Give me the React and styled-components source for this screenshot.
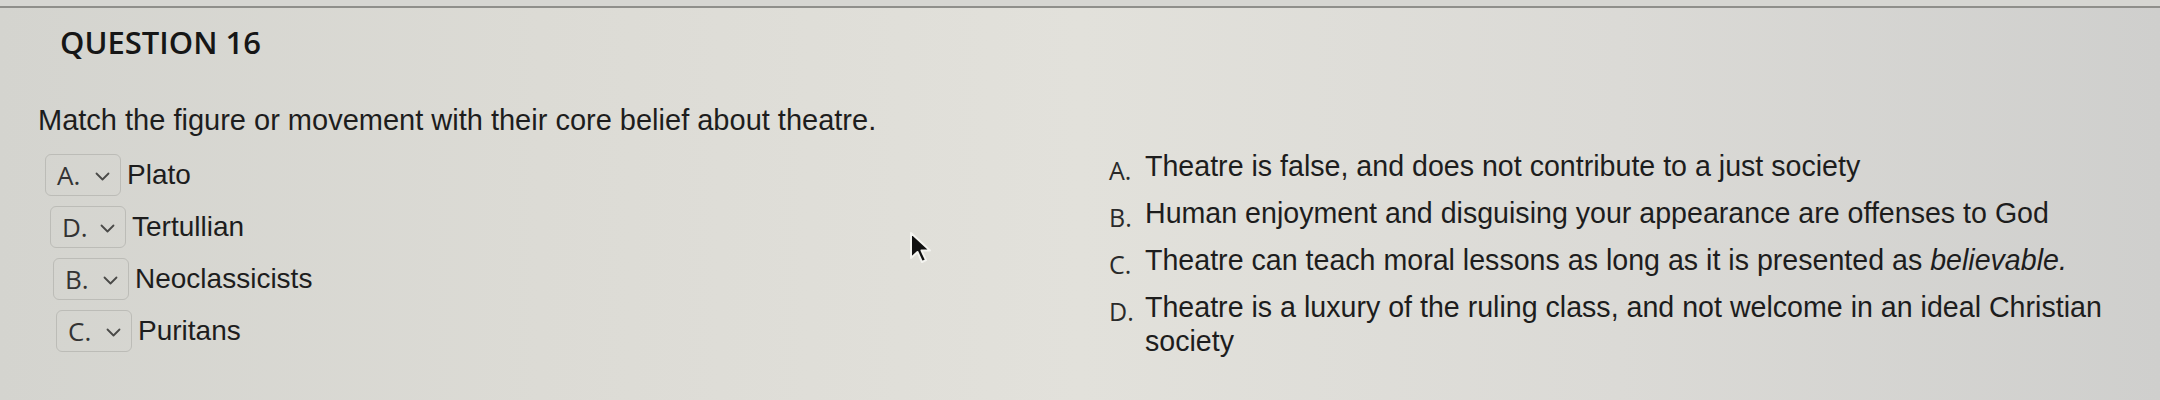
import React from 'react';
import styled, { createGlobalStyle } from 'styled-components';

const GlobalStyle = createGlobalStyle`
  html, body {
    margin: 0;
    padding: 0;
  }
  body {
    width: 2160px;
    height: 400px;
    overflow: hidden;
    background: linear-gradient(90deg, #d4d4cf 0%, #dcdbd5 25%, #e2e1db 50%, #dbdad6 75%, #cfcfcd 100%);
    font-family: "Liberation Sans", Arial, sans-serif;
    color: #1d1d1d;
  }
`;

const matches = [
  { pick: 'A.', label: 'Plato' },
  { pick: 'D.', label: 'Tertullian' },
  { pick: 'B.', label: 'Neoclassicists' },
  { pick: 'C.', label: 'Puritans' },
];

const answers = [
  { letter: 'A.', text: <>Theatre is false, and does not contribute to a just society</> },
  { letter: 'B.', text: <>Human enjoyment and disguising your appearance are offenses to God</> },
  { letter: 'C.', text: <>Theatre can teach moral lessons as long as it is presented as <em>believable.</em></> },
  { letter: 'D.', text: <>Theatre is a luxury of the ruling class, and not welcome in an ideal Christian society</> },
];

const Chevron = () => (
  <svg width="15" height="9" viewBox="0 0 15 9" fill="none">
    <path d="M1.5 1.5l6 6 6-6" stroke="#4a4a48" strokeWidth="1.8" strokeLinecap="round" strokeLinejoin="round" />
  </svg>
);

const Cursor = () => (
  <CursorMark width="24" height="34" viewBox="0 0 24 34">
    <path d="M2 2v25l6.5-6 4.5 10 4-1.8-4.5-9.7H21z" fill="#111" stroke="#f4f4f0" strokeWidth="2" strokeLinejoin="round" />
  </CursorMark>
);

const App = () => (
  <>
    <GlobalStyle />
    <Page>
      <TopRule />
      <Title>QUESTION 16</Title>
      <Prompt>Match the figure or movement with their core belief about theatre.</Prompt>
      <Columns>
        <PickList>
          {matches.map((m, i) => (
            <PickRow key={m.label} $shift={[0, 5, 8, 11][i]}>
              <PickBox>
                <PickValue>{m.pick}</PickValue>
                <Chevron />
              </PickBox>
              <PickLabel>{m.label}</PickLabel>
            </PickRow>
          ))}
        </PickList>
        <AnswerList>
          {answers.map((a) => (
            <Answer key={a.letter}>
              <AnswerLetter>{a.letter}</AnswerLetter>
              <AnswerText>{a.text}</AnswerText>
            </Answer>
          ))}
        </AnswerList>
      </Columns>
      <Cursor />
    </Page>
  </>
);

const Page = styled.div`
  position: relative;
  height: 400px;
`;

const TopRule = styled.div`
  height: 6px;
  border-bottom: 2px solid #8f8f8b;
  background: #d6d6d2;
`;

const Title = styled.h1`
  margin: 14px 0 0 60px;
  font-family: "Open Sans", sans-serif;
  font-weight: 600;
  font-size: 31px;
  line-height: 40px;
  color: #161616;
`;

const Prompt = styled.p`
  margin: 40px 0 0 38px;
  font-size: 29px;
  line-height: 36px;
`;

const Columns = styled.div`
  display: grid;
  grid-template-columns: 1064px 1fr;
  margin: 9px 0 0 45px;
`;

const PickList = styled.div`
  display: flex;
  flex-direction: column;
  gap: 10px;
  padding-top: 7px;
`;

const PickRow = styled.div`
  display: flex;
  align-items: center;
  gap: 6px;
  height: 42px;
  padding-left: ${(p) => p.$shift}px;
`;

const PickBox = styled.div`
  display: flex;
  align-items: center;
  gap: 14px;
  box-sizing: border-box;
  width: 76px;
  height: 42px;
  padding: 0 0 0 11px;
  border: 1.5px solid #bcbcb7;
  border-radius: 6px;
  svg {
    margin-top: 2px;
  }
`;

const PickValue = styled.span`
  font-family: "Open Sans", sans-serif;
  font-size: 26px;
  color: #333;
  width: 24px;
`;

const PickLabel = styled.span`
  font-size: 28px;
  line-height: 34px;
`;

const AnswerList = styled.div`
  display: flex;
  flex-direction: column;
  gap: 13px;
  padding-top: 2px;
`;

const Answer = styled.div`
  display: grid;
  grid-template-columns: 36px 1000px;
  align-items: baseline;
`;

const AnswerLetter = styled.span`
  font-family: "Open Sans", sans-serif;
  font-size: 25px;
  color: #2a2a2a;
  position: relative;
  top: 4px;
`;

const AnswerText = styled.span`
  font-size: 28.6px;
  line-height: 34px;
  em {
    font-style: italic;
  }
`;

const CursorMark = styled.svg`
  position: absolute;
  left: 909px;
  top: 231px;
`;

export default App;
